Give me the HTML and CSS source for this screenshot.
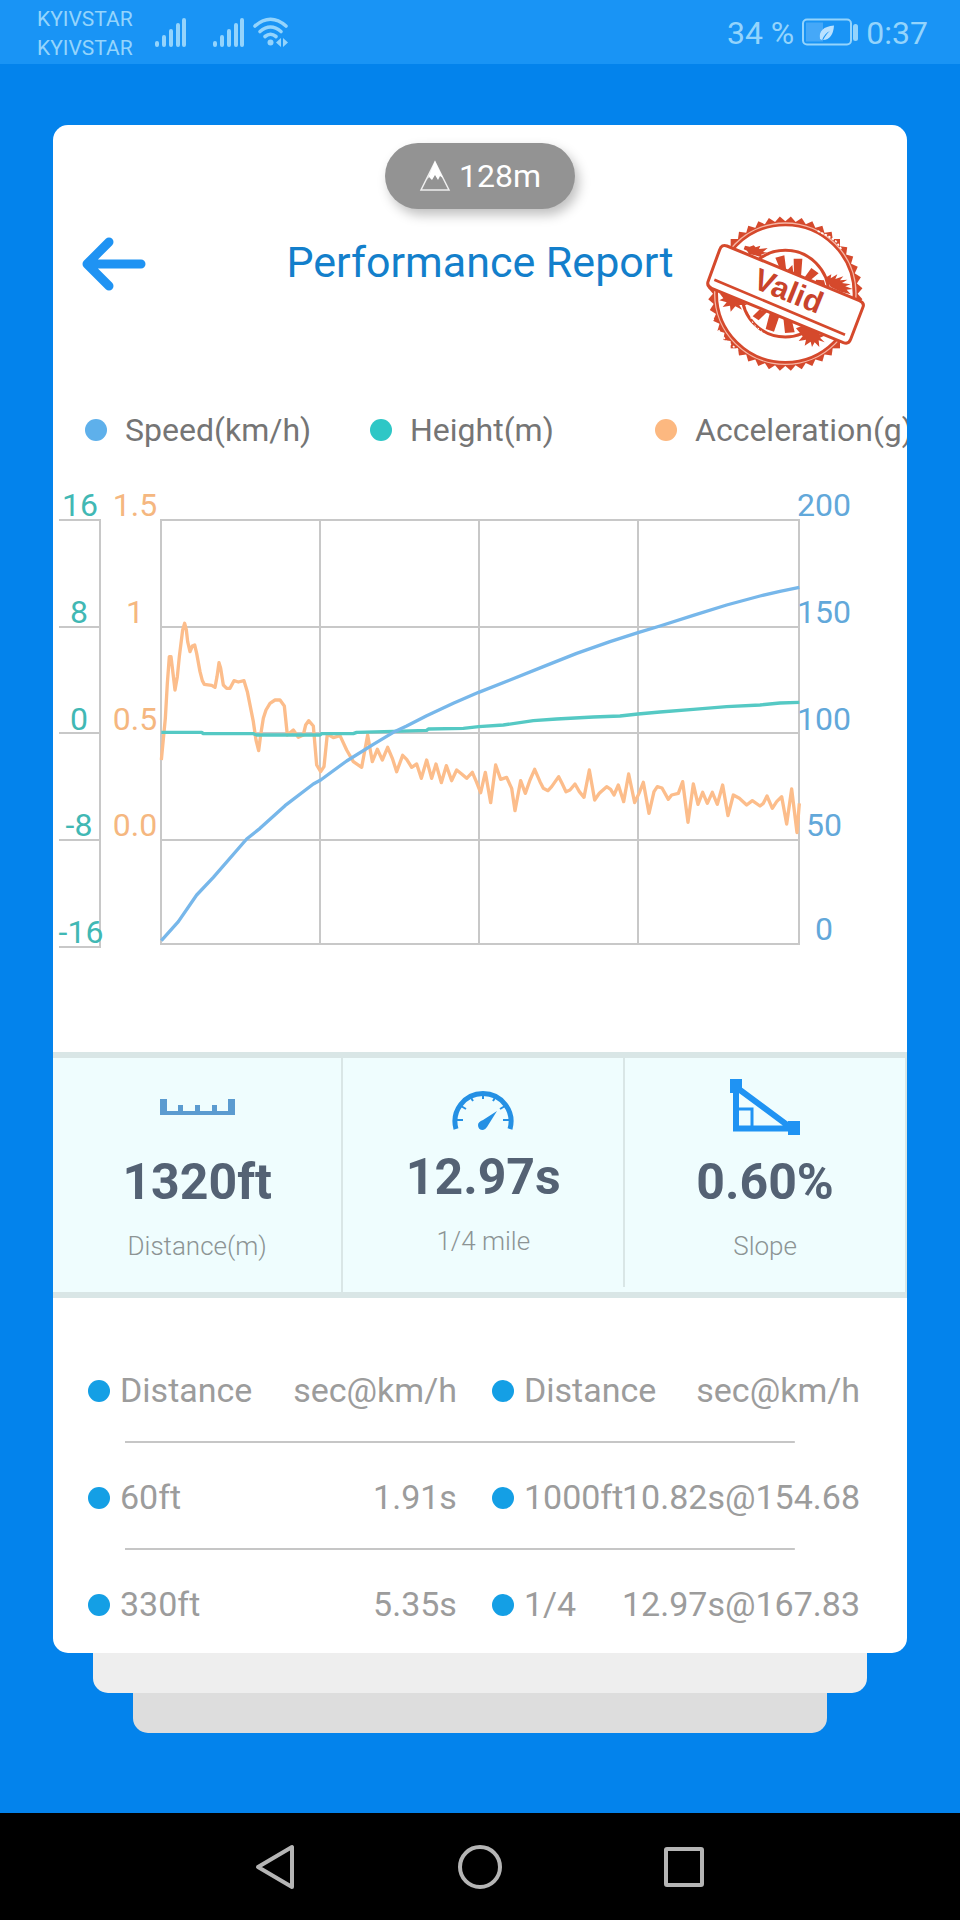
FILE: index.html
```html
<!DOCTYPE html>
<html lang="en">
<head>
    <meta charset="UTF-8">
    <meta name="viewport" content="width=device-width, initial-scale=1.0">
    <title>Performance Report</title>
    <link rel="stylesheet" href="styles.css">
</head>
<body>

<header class="statusbar">
    <div class="carrier">
        <div>KYIVSTAR</div>
        <div>KYIVSTAR</div>
    </div>
    <svg class="signal" viewBox="0 0 32 30" width="32" height="30">
        <path d="M2 26v2M9 20v8M16 14v14M23 8v20M29 3v25" stroke="currentColor" stroke-width="4" stroke-linecap="round"/>
    </svg>
    <svg class="signal signal2" viewBox="0 0 32 30" width="32" height="30">
        <path d="M2 26v2M9 20v8M16 14v14M23 8v20M29 3v25" stroke="currentColor" stroke-width="4" stroke-linecap="round"/>
    </svg>
    <svg class="wifi" viewBox="0 0 36 30" width="36" height="30">
        <g fill="none" stroke="currentColor" stroke-width="3.6" stroke-linecap="round">
            <path d="M2 9Q17.500-4.500 33 9"/>
            <path d="M7 14.500Q17.500 5.500 28 14.500"/>
            <path d="M12 19.500Q17.500 15 23 19.500"/>
        </g>
        <circle cx="17.500" cy="25.500" r="3" fill="currentColor"/>
        <path d="M28 21v9l-5-4.500zM30 21v9l5-4.500z" fill="currentColor"/>
    </svg>
    <div class="right">
        <span>34 %</span>
        <svg viewBox="0 0 56 28" width="56" height="28">
            <rect x="1" y="1.500" width="48" height="25" rx="4" fill="none" stroke="currentColor" stroke-width="2"/>
            <rect x="4" y="4.500" width="17" height="19" fill="#45a8f8"/>
            <path d="M18 21q-2-12 14-13.500q-1 14-11 14.500q4-7 7-9q-5 2-8 9z" fill="#b9e1ff"/>
            <rect x="51" y="6" width="5" height="17" rx="2.500" fill="currentColor"/>
        </svg>
        <span>0:37</span>
    </div>
</header>

<main class="main">
    <section class="card">
        <div class="chip">
            <svg viewBox="0 0 32 32" width="32" height="32">
                <path d="M16 2L30 30H2z" fill="none" stroke="#eee" stroke-width="1.500"/>
                <path d="M16 1L24 18l-3-2-2 4-3-5-3 5-3-3-2 3z" fill="#fff"/>
            </svg>
            <span>128m</span>
        </div>

        <div class="header">
            <button class="back" aria-label="Back">
                <svg viewBox="0 0 64 54" width="64" height="54">
                    <path d="M27 5L5 27l22 22M5 27h54" fill="none" stroke="#1f93f3" stroke-width="9" stroke-linecap="round" stroke-linejoin="round"/>
                </svg>
            </button>
            <h1>Performance Report</h1>
            <svg class="stamp" viewBox="80 74 480 474" width="160" height="158">
                <defs>
                    <rect id="sq" x="-164" y="-164" width="328" height="328"/>
                </defs>
                <!-- 11 rotated squares make the 44 teeth -->
                <g transform="translate(318 310)" fill="#d5492c">
                    <use href="#sq"/>
                    <use href="#sq" transform="rotate(8.180)"/>
                    <use href="#sq" transform="rotate(16.360)"/>
                    <use href="#sq" transform="rotate(24.550)"/>
                    <use href="#sq" transform="rotate(32.730)"/>
                    <use href="#sq" transform="rotate(40.910)"/>
                    <use href="#sq" transform="rotate(49.090)"/>
                    <use href="#sq" transform="rotate(57.270)"/>
                    <use href="#sq" transform="rotate(65.450)"/>
                    <use href="#sq" transform="rotate(73.640)"/>
                    <use href="#sq" transform="rotate(81.820)"/>
                    <circle r="214" fill="#f7b7a6"/>
                    <circle r="206" fill="#fff" stroke="#d5492c" stroke-width="8"/>
                    <circle r="130" fill="#fff" stroke="#d5492c" stroke-width="9"/>
                </g>
                <!-- spokes -->
                <g fill="#d5492c">
                    <path d="M288 202l27-7 6 47-18-4zM343 205l26 0-4 54-21-8zM396 233l22 16-34 28-14-8z"/>
                    <path d="M240 358l24 6-26 26-18-12zM272 366l28 12-16 46-25-8zM312 382l26 10 8 34-29 2z"/>
                    <path d="M325 238l14-14 4 30zM410 268l24 2 6 22-32-12z"/>
                </g>
                <!-- ink splashes -->
                <g fill="#d5492c">
                    <path d="M197 166l14 3 12-4 6 6 14-5-4 10 26-3-14 12 14 2-20 6 8 10-26-8-18-4-6-10-10-4z"/>
                    <path d="M438 262l18-10-2 12 20-12-6 14 24-8-10 12 22-2-16 10 26 4-16 6 22 8-18 2 12 14-30-8-30-14z"/>
                    <path d="M120 308l20 4 14-4 10 10 20-2-8 10 34 4-16 8 10 6-24 0 8 14-20-10-14 16-2-18-22 4 12-14-22-6 12-6z"/>
                    <path d="M350 414l30-12 44 18-4 12 20 2-18 8 14 14-18-6 2 20-14-14-8 14-4-16-18 12 4-18-22 4 12-14z"/>
                </g>
                <path d="M415 122l30 14 24 16 20 28" fill="none" stroke="#fff" stroke-width="5" stroke-dasharray="7 5"/>
                <path d="M100 385l18 35 24 34 36 26" fill="none" stroke="#fff" stroke-width="5" stroke-dasharray="6 7"/>
                <path d="M200 345l22 56 34 30" fill="none" stroke="#fff" stroke-width="3" stroke-dasharray="5 8"/>
                <path d="M143 167L540 331Q556 338 551 350L514 447Q508 463 492 457L97 294Q82 288 86 274L121 178Q127 161 143 167z" fill="#fff" stroke="#d5492c" stroke-width="9"/>
                <path d="M105 268L497 433" stroke="#d5492c" stroke-width="8"/>
                <text class="stamp-text" x="0" y="0" transform="translate(316 331) rotate(22)">Valid</text>
            </svg>
        </div>

        <div class="legend">
            <div class="legend-item"><span class="dot speed"></span>Speed(km/h)</div>
            <div class="legend-item"><span class="dot height"></span>Height(m)</div>
            <div class="legend-item"><span class="dot accel"></span>Acceleration(g)</div>
        </div>

        <svg class="chart" viewBox="0 0 854 500">
            <g class="grid">
                <path d="M107 50H747M107 157H747M107 263H747M107 370H747M107 474H747"/>
                <path d="M108 49V475M267 50V474M426 50V474M585 50V474M746 49V475"/>
                <path d="M6 50H48M6 157H47M6 263H47M6 370H47M6 477H48M47 50V477"/>
            </g>
            <g class="t-height">
                <text x="27" y="46">16</text>
                <text x="26" y="153">8</text>
                <text x="26" y="260">0</text>
                <text x="26" y="366">-8</text>
                <text x="28" y="473">-16</text>
            </g>
            <g class="t-accel">
                <text x="82" y="46">1.5</text>
                <text x="82" y="153">1</text>
                <text x="82" y="260">0.5</text>
                <text x="82" y="366">0.0</text>
            </g>
            <g class="t-speed">
                <text x="771" y="46">200</text>
                <text x="771" y="153">150</text>
                <text x="771" y="260">100</text>
                <text x="771" y="366">50</text>
                <text x="771" y="470">0</text>
            </g>
            <!-- series are stored at 3 units per pixel -->
            <g class="lines" transform="translate(-13 0) scale(0.33333)">
                <polyline class="l-accel" points="364,870 376,745 382,640 388,560 393,560 405,660 412,620 418,560 428,480 434,460 439,480 443,515 450,545 457,528 464,525 470,550 480,605 487,632 493,643 515,646 525,652 531,620 537,578 542,595 550,645 560,655 570,655 582,632 595,636 612,632 622,665 640,755 648,810 656,842 662,795 670,745 678,720 690,700 705,690 720,690 733,708 742,795 760,780 775,802 790,795 797,765 806,752 820,768 830,885 842,905 852,890 862,792 880,803 900,797 920,840 940,875 965,892 983,795 997,875 1012,838 1027,870 1043,832 1057,865 1070,905 1088,856 1100,868 1115,892 1130,882 1144,925 1160,870 1175,925 1188,882 1204,938 1219,887 1235,932 1250,900 1265,912 1280,925 1297,907 1309,935 1322,968 1336,907 1352,998 1367,885 1382,928 1400,922 1415,955 1425,1022 1442,932 1456,970 1470,930 1484,898 1500,935 1510,955 1524,962 1535,950 1556,920 1566,940 1578,965 1590,960 1605,942 1618,965 1632,982 1648,900 1664,990 1678,970 1700,950 1712,958 1722,975 1735,945 1751,995 1766,912 1784,998 1797,970 1810,937 1827,1030 1842,965 1852,950 1866,954 1885,988 1895,975 1915,970 1928,935 1944,1057 1960,942 1974,1003 1988,967 2002,1000 2017,967 2032,1003 2048,945 2064,1037 2080,975 2098,985 2120,1005 2137,992 2160,1008 2170,1000 2181,978 2197,1015 2210,995 2225,980 2240,1062 2255,957 2271,1088 2278,1000"/>
                <polyline class="l-height" points="364,787 485,787 490,791 640,791 650,795 840,795 845,791 940,791 950,787 1060,784 1160,781 1165,777 1270,775 1316,770 1390,765 1480,752 1550,747 1660,741 1740,738 1794,732 1860,726 1960,718 2060,710 2160,705 2220,699 2278,697"/>
                <polyline class="l-speed" points="364,1412 415,1355 470,1275 520,1222 620,1107 660,1075 735,1007 820,942 842,930 920,873 1000,823 1060,787 1100,768 1160,737 1240,700 1316,667 1410,630 1510,590 1610,550 1710,515 1794,488 1860,468 1960,436 2060,405 2160,378 2220,364 2278,352"/>
            </g>
        </svg>

        <div class="stats">
            <div class="stat">
                <div class="stat-icon">
                    <svg viewBox="0 0 75 16" width="75" height="16">
                        <path d="M0 0h7v12h11V6h5v6h12V6h5v6h12V6h5v6h11V0h7v16H0z" fill="#5b9bd0"/>
                    </svg>
                </div>
                <div class="stat-value">1320ft</div>
                <div class="stat-label">Distance(m)</div>
            </div>
            <div class="stat stat-mid">
                <div class="stat-icon">
                    <svg viewBox="0 0 62 42" width="62" height="42">
                        <path d="M4 41A28 28 0 1 1 58 41" fill="none" stroke="#2490e4" stroke-width="5"/>
                        <path d="M5 32h6M9 18l5 3M18 8l3 5M31 4v7M44 8l-3 5M53 18l-5 3M57 32h-6" stroke="#2490e4" stroke-width="2"/>
                        <path d="M45 23L35 39q-2 3-4 3-5 0-5-5 0-3 5-5z" fill="#2490e4"/>
                    </svg>
                </div>
                <div class="stat-value">12.97s</div>
                <div class="stat-label">1/4 mile</div>
            </div>
            <div class="stat">
                <div class="stat-icon">
                    <svg viewBox="0 0 70 56" width="70" height="56">
                        <path d="M6 8V49.500H62z" fill="none" stroke="#1f93f3" stroke-width="6"/>
                        <path d="M8 30h14v18" fill="none" stroke="#1f93f3" stroke-width="3"/>
                        <path d="M0 0h12v14H0zM58 42h12v14H58z" fill="#1f93f3"/>
                    </svg>
                </div>
                <div class="stat-value">0.60%</div>
                <div class="stat-label">Slope</div>
            </div>
        </div>

        <table class="results">
            <thead>
                <tr>
                    <th class="name" scope="col">Distance</th>
                    <th class="value" scope="col">sec@km/h</th>
                    <th class="name" scope="col">Distance</th>
                    <th class="value" scope="col">sec@km/h</th>
                </tr>
            </thead>
            <tbody>
                <tr>
                    <td class="name">60ft</td>
                    <td class="value">1.91s</td>
                    <td class="name">1000ft</td>
                    <td class="value">10.82s@154.68</td>
                </tr>
                <tr class="last">
                    <td class="name">330ft</td>
                    <td class="value">5.35s</td>
                    <td class="name">1/4</td>
                    <td class="value">12.97s@167.83</td>
                </tr>
            </tbody>
        </table>
    </section>
    <div class="sheet sheet1"></div>
    <div class="sheet sheet2"></div>
</main>

<nav class="navbar">
    <button aria-label="Back">
        <svg viewBox="0 0 48 48" width="48" height="48">
            <path d="M40 4V44L6 24z" fill="none" stroke="#b5b5b5" stroke-width="4" stroke-linejoin="round"/>
        </svg>
    </button>
    <button aria-label="Home">
        <svg viewBox="0 0 48 48" width="48" height="48">
            <circle cx="24" cy="24" r="20" fill="none" stroke="#b5b5b5" stroke-width="4"/>
        </svg>
    </button>
    <button aria-label="Recent apps">
        <svg viewBox="0 0 48 48" width="48" height="48">
            <rect x="6" y="6" width="36" height="36" rx="1" fill="none" stroke="#b5b5b5" stroke-width="4"/>
        </svg>
    </button>
</nav>

</body>
</html>
```

FILE: styles.css
```css
* {
    box-sizing: border-box;
}
body {
    margin: 0;
    min-height: 100vh;
    display: flex;
    flex-direction: column;
    background-color: #0383ec;
    font-family: Roboto, sans-serif;
}
svg {
    display: block;
    flex-shrink: 0;
}
button {
    padding: 0;
    border: none;
    background: none;
    cursor: pointer;
}

/* status bar */
.statusbar {
    display: flex;
    align-items: center;
    height: 64px;
    padding: 0 32px 0 37px;
    background-color: #1994f5;
    color: #94d4fc;
}
.carrier {
    font-size: 21px;
    line-height: 29px;
    padding-top: 4px;
}
.signal {
    margin-left: 22px;
}
.signal2 {
    margin-left: 26px;
}
.wifi {
    margin-left: 8px;
}
.right {
    display: flex;
    align-items: center;
    gap: 8px;
    margin-left: auto;
    font-size: 32px;
    line-height: 40px;
}
.right span {
    padding-top: 2px;
}

/* card */
.main {
    padding: 61px 53px 80px;
}
.card {
    background-color: #fff;
    border-radius: 15px;
    overflow: hidden;
    padding-top: 18px;
}
.sheet {
    height: 40px;
    border-radius: 0 0 15px 15px;
}
.sheet1 {
    margin: 0 40px;
    background-color: #eee;
}
.sheet2 {
    margin: 0 80px;
    background-color: #ddd;
}
.chip {
    display: flex;
    align-items: center;
    justify-content: center;
    gap: 8px;
    width: 190px;
    height: 66px;
    margin: 0 auto;
    border-radius: 33px;
    background-color: #939393;
    color: #fff;
    font-size: 32px;
    box-shadow: 4px 6px 12px rgba(0, 0, 0, 0.25);
}

.header {
    display: grid;
    grid-template-columns: 1fr auto 1fr;
    align-items: start;
    padding: 6px 41px 0 29px;
}
.back {
    justify-self: start;
    padding: 22px 0;
}
.header h1 {
    margin: 0;
    padding-left: 12px;
    font-size: 43px;
    font-weight: 400;
    line-height: 94px;
    color: #137fcb;
}
.stamp {
    justify-self: end;
}
.stamp-text {
    font-family: "Liberation Sans", Arial, sans-serif;
    font-size: 92px;
    font-weight: 700;
    fill: #c9432b;
    text-anchor: middle;
}

.legend {
    display: grid;
    grid-template-columns: repeat(3, 285px);
    padding-left: 32px;
    margin-top: 17px;
    font-size: 32px;
    line-height: 80px;
    color: #757575;
}
.legend-item {
    display: flex;
    align-items: center;
    gap: 18px;
    white-space: nowrap;
}
.dot {
    width: 22px;
    height: 22px;
    border-radius: 50%;
}
.speed {
    background-color: #5eb0eb;
}
.height {
    background-color: #2ec7c6;
}
.accel {
    background-color: #fcb880;
}

/* chart */
.chart {
    width: 100%;
    height: auto;
    font-size: 32px;
    text-anchor: middle;
}
.grid {
    stroke: #c8c8c8;
    stroke-width: 2;
}
.lines {
    fill: none;
    stroke-width: 10;
    stroke-linejoin: round;
}
.l-accel {
    stroke: #fcbd8b;
}
.l-height {
    stroke: #55c9c4;
}
.l-speed {
    stroke: #77b7ea;
}
.t-height {
    fill: #41b8b4;
}
.t-accel {
    fill: #f5b780;
}
.t-speed {
    fill: #62a8da;
}

/* stats */
.stats {
    display: grid;
    grid-template-columns: 34% 33% 33%;
    margin-top: 82px;
    border-top: 6px solid #d9e6e6;
    border-bottom: 6px solid #d9e6e6;
    background-color: #effdfe;
}
.stat {
    border-right: 2px solid #d9e6e6;
    padding-bottom: 29px;
    text-align: center;
}
.stat-icon {
    display: flex;
    align-items: center;
    justify-content: center;
    height: 98px;
}
.stat-mid {
    margin-bottom: 5px;
}
.stat-mid .stat-icon {
    height: 93px;
    padding-top: 9px;
}
.stat-value {
    font-size: 50px;
    font-weight: 700;
    line-height: 52px;
    color: #546274;
}
.stat-label {
    margin-top: 21px;
    font-size: 26px;
    font-weight: 300;
    line-height: 34px;
    color: #8c9494;
}

/* results */
.results {
    width: 100%;
    margin: 38px 0 -4px;
    table-layout: fixed;
    border-collapse: collapse;
    font-size: 34px;
    color: #9c9c9c;
}
.results tr {
    height: 107px;
    background: linear-gradient(#c6c6c6, #c6c6c6) 72px 100% / calc(100% - 184px) 2px no-repeat;
}
.results .last {
    background: none;
}
.results th, .results td {
    padding: 0;
    font-weight: 400;
    white-space: nowrap;
}
.results th:nth-child(1) {
    width: 24%;
}
.results th:nth-child(2) {
    width: 23.3%;
}
.results th:nth-child(3) {
    width: 19%;
}
.results .name {
    padding-left: 35px;
    text-align: left;
}
.results .name::before {
    content: "";
    display: inline-block;
    width: 22px;
    height: 22px;
    margin-right: 10px;
    border-radius: 50%;
    background-color: #149fe5;
}
.results .value {
    text-align: right;
}
.results .value:last-child {
    padding-right: 47px;
}

/* android buttons */
.navbar {
    display: flex;
    align-items: center;
    justify-content: center;
    gap: 156px;
    height: 107px;
    margin-top: auto;
    background-color: #000;
}
```
